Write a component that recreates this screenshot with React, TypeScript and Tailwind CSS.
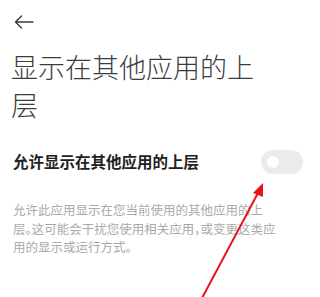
export default function App() {
  const font = { fontFamily: '"Noto Sans CJK SC", "Noto Sans", sans-serif' };
  return (
    <div className="relative w-[320px] h-[297px] bg-white overflow-hidden" style={font}>
      <div className="pl-[14px] pt-[15px] h-[40px]">
        <svg width="20" height="14" viewBox="0 0 20 14" fill="none">
          <path d="M19 7H1.5M7.5 1L1.5 7l6 6" stroke="#3a3a3a" strokeWidth="1.4" strokeLinecap="round" strokeLinejoin="round" />
        </svg>
      </div>
      <h1 className="mt-[8px] pl-[11px] pr-[40px] text-[27px] leading-[38px] font-light text-[#3c3c3c]">
        显示在其他应用的上层
      </h1>
      <div className="mt-[26px] flex items-center justify-between pl-[13px] pr-[17px]">
        <span className="text-[15.5px] font-bold text-[#222]">允许显示在其他应用的上层</span>
        <div className="w-[42px] h-[24px] rounded-full bg-[#ebebeb] flex items-center pl-[6px]">
          <div className="w-[12px] h-[12px] rounded-full bg-white" />
        </div>
      </div>
      <p className="mt-[27px] pl-[13px] text-[12.5px] leading-[18.5px] text-[#aaaaaa] whitespace-nowrap [font-feature-settings:'halt']">
        允许此应用显示在您当前使用的其他应用的上
        <br />
        层。这可能会干扰您使用相关应用，或变更这类应
        <br />
        用的显示或运行方式。
      </p>
      <svg className="absolute left-0 top-0" width="320" height="297" viewBox="0 0 320 297">
        <line x1="201" y1="300" x2="258" y2="193" stroke="#e8141b" strokeWidth="2" />
        <polygon points="263,183 253,193 263,197" fill="#e8141b" />
      </svg>
    </div>
  );
}
